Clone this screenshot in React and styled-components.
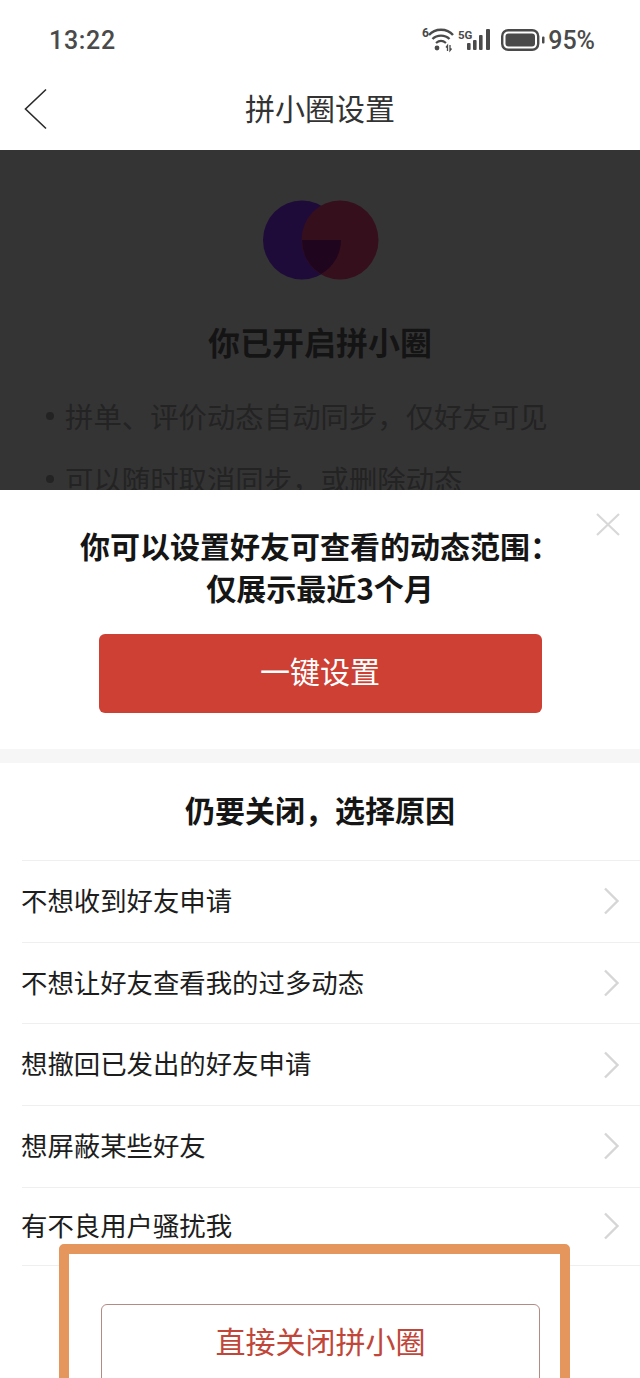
import React from 'react';
import styled, { createGlobalStyle } from 'styled-components';

const GlobalStyle = createGlobalStyle`
  html, body {
    margin: 0;
    padding: 0;
    background: #fff;
  }
  * {
    box-sizing: border-box;
  }
`;

const Page = styled.div`
  position: relative;
  width: 640px;
  height: 1378px;
  overflow: hidden;
  background: #fff;
  font-family: 'Noto Sans CJK SC', 'Liberation Sans', sans-serif;
`;

const StatusBar = styled.div`
  height: 72px;
  padding: 7px 45px 0 49px;
  display: flex;
  align-items: center;
  justify-content: space-between;
  color: #4a4a4a;
`;

const Clock = styled.span`
  margin-top: 2px;
  font-family: 'Roboto', 'Liberation Sans', sans-serif;
  font-size: 25px;
  font-weight: 500;
  letter-spacing: 0.7px;
`;

const StatusIcons = styled.div`
  display: flex;
  align-items: center;
`;

const StatusIcon = styled.svg`
  display: block;
  flex-shrink: 0;
  overflow: visible;
  margin-right: ${(p) => p.$gap}px;
`;

const Percent = styled.span`
  margin-top: 2px;
  font-family: 'Roboto', 'Liberation Sans', sans-serif;
  font-size: 25px;
  font-weight: 500;
`;

const NavBar = styled.div`
  position: relative;
  height: 78px;
  display: flex;
  align-items: center;
  justify-content: center;
`;

const BackIcon = styled.svg`
  position: absolute;
  left: 24px;
  top: 16px;
`;

const NavTitle = styled.div`
  font-size: 30px;
  line-height: 40px;
  padding-bottom: 8px;
  color: #333;
`;

const Intro = styled.section`
  height: 340px;
  overflow: hidden;
  background: #343434;
  color: #1f1f1f;
  padding-top: 50px;
  display: flex;
  flex-direction: column;
  align-items: center;
`;

const LogoMark = styled.svg`
  display: block;
  flex-shrink: 0;
  margin-left: 2px;
`;

const IntroTitle = styled.h1`
  margin: 39px 0 0;
  flex-shrink: 0;
  font-size: 32px;
  line-height: 44px;
  font-weight: 700;
  color: #141414;
`;

const BulletList = styled.ul`
  align-self: stretch;
  flex-shrink: 0;
  list-style: none;
  margin: 33px 0 0;
  padding: 0 0 0 46px;
  display: flex;
  flex-direction: column;
  gap: 23px;
`;

const Bullet = styled.li`
  display: flex;
  align-items: center;
  gap: 11px;
  font-size: 28.4px;
  line-height: 40px;
  color: #232323;

  &::before {
    content: '';
    width: 8px;
    height: 8px;
    border-radius: 50%;
    background: #232323;
  }
`;

const Offer = styled.section`
  position: relative;
  height: 259px;
  padding-top: 34px;
  display: flex;
  flex-direction: column;
  align-items: center;
`;

const CloseIcon = styled.svg`
  position: absolute;
  top: 23px;
  right: 20px;
`;

const OfferText = styled.div`
  font-size: 30px;
  line-height: 42px;
  font-weight: 700;
  color: #151515;
  text-align: center;
`;

const PrimaryButton = styled.button`
  margin-top: 26px;
  width: 443px;
  height: 79px;
  padding: 0 0 8px;
  border: none;
  border-radius: 6px;
  background: #cd4033;
  color: #fff;
  font-family: inherit;
  font-size: 30px;
`;

const SectionGap = styled.div`
  height: 14px;
  background: #f6f6f6;
`;

const ReasonHeading = styled.h2`
  margin: 0;
  height: 97px;
  padding-bottom: 6px;
  display: flex;
  align-items: center;
  justify-content: center;
  font-size: 30px;
  font-weight: 700;
  color: #151515;
`;

const ReasonList = styled.div`
  margin-left: 22px;
  border-bottom: 1px solid #efefef;
`;

const ReasonRow = styled.div`
  height: ${(p) => (p.$last ? '78px' : '81.7px')};
  padding-right: 20px;
  border-top: 1px solid #efefef;
  display: flex;
  align-items: center;
  justify-content: space-between;
  font-size: 26.4px;
  color: #1d1d1d;
`;

const ReasonLabel = styled.span`
  margin: 0 0 4px -1px;
`;

const Frame = styled.div`
  position: absolute;
  left: 59px;
  top: 1244px;
  width: 511px;
  height: 150px;
  border: 10px solid #e4965c;
  border-radius: 5px;
  background: #fff;
  padding: 50px 0 0 32px;
`;

const OutlineButton = styled.button`
  width: 439px;
  height: 90px;
  background: #fff;
  border: 1px solid #b48a85;
  border-radius: 6px;
  padding: 0 0 18px;
  color: #c0463a;
  font-family: inherit;
  font-size: 30px;
`;

// escapes keep the full-width punctuation of the screen
const bullets = [
  '拼单、评价动态自动同步\uFF0C仅好友可见',
  '可以随时取消同步\uFF0C或删除动态',
];

const offerLine = '你可以设置好友可查看的动态范围\uFF1A';
const reasonHeading = '仍要关闭\uFF0C选择原因';

const reasons = [
  '不想收到好友申请',
  '不想让好友查看我的过多动态',
  '想撤回已发出的好友申请',
  '想屏蔽某些好友',
  '有不良用户骚扰我',
];

const Wifi = () => (
  <StatusIcon $gap={4} width="32" height="24" viewBox="0 0 32 24" fill="none" stroke="#4a4a4a">
    <text x="0" y="9" fontSize="12" fontWeight="700" fill="#4a4a4a" stroke="none" fontFamily="Roboto, sans-serif">6</text>
    <path d="M7 7 C13 0 25 0 31 7" strokeWidth="2.4" />
    <path d="M10.5 11 C15 6.5 23 6.5 27.5 11" strokeWidth="2.4" />
    <path d="M14 15 C17 12.5 21 12.5 24 15" strokeWidth="2.2" />
    <circle cx="15" cy="20" r="2.4" fill="#4a4a4a" stroke="none" />
    <path d="M25.5 23 V17.5 L24 19.5 M28 17 V22.5 L29.5 20.5" strokeWidth="1.3" />
  </StatusIcon>
);

const Signal = () => (
  <StatusIcon $gap={9} width="34" height="22" viewBox="0 0 34 22" fill="#4a4a4a">
    <text x="0" y="10" fontSize="11.5" fontWeight="700" fontFamily="Roboto, sans-serif">5G</text>
    <rect x="9" y="14" width="3.6" height="7" rx="1" />
    <rect x="15" y="11" width="3.6" height="10" rx="1" />
    <rect x="21" y="6" width="3.6" height="15" rx="1" />
    <rect x="28" y="0" width="4" height="21" rx="1" />
  </StatusIcon>
);

const Battery = () => (
  <StatusIcon $gap={3} width="44" height="22" viewBox="0 0 44 22">
    <rect x="1.2" y="1.2" width="36" height="19.6" rx="6" fill="none" stroke="#4a4a4a" strokeWidth="2.4" />
    <rect x="4.5" y="4.5" width="29.5" height="13" rx="3" fill="#4a4a4a" />
    <rect x="41" y="7.5" width="2.5" height="7" rx="1" fill="#4a4a4a" />
  </StatusIcon>
);

const Logo = () => (
  <LogoMark width="116" height="80" viewBox="0 0 116 80">
    <ellipse cx="39" cy="40" rx="39" ry="39.5" fill="#1e0b3a" />
    <ellipse cx="77" cy="40" rx="38.5" ry="39.5" fill="#360f1c" />
    <path d="M39 40 H78 A39 39 0 0 1 58 74 A39 39 0 0 1 39 40 Z" fill="#20051f" />
  </LogoMark>
);

const Chevron = () => (
  <svg width="17" height="28" viewBox="0 0 17 28" fill="none" stroke="#d6d6d6" strokeWidth="2.4">
    <path d="M2 1.5 L14.5 14 L2 26.5" />
  </svg>
);

const App = () => (
  <Page>
    <GlobalStyle />
    <StatusBar>
      <Clock>13:22</Clock>
      <StatusIcons>
        <Wifi />
        <Signal />
        <Battery />
        <Percent>95%</Percent>
      </StatusIcons>
    </StatusBar>
    <NavBar>
      <BackIcon width="24" height="42" viewBox="0 0 24 42" fill="none" stroke="#2a2a2a" strokeWidth="1.6">
        <path d="M22 1.5 L1.5 21 L22 40.5" />
      </BackIcon>
      <NavTitle>拼小圈设置</NavTitle>
    </NavBar>
    <Intro>
      <Logo />
      <IntroTitle>你已开启拼小圈</IntroTitle>
      <BulletList>
        {bullets.map((bullet) => (
          <Bullet key={bullet}>{bullet}</Bullet>
        ))}
      </BulletList>
    </Intro>
    <Offer>
      <CloseIcon width="24" height="23" viewBox="0 0 24 23" fill="none" stroke="#d8d8d8" strokeWidth="2.2">
        <path d="M1 1 L23 22 M23 1 L1 22" />
      </CloseIcon>
      <OfferText>
        {offerLine}
        <br />
        仅展示最近3个月
      </OfferText>
      <PrimaryButton>一键设置</PrimaryButton>
    </Offer>
    <SectionGap />
    <ReasonHeading>{reasonHeading}</ReasonHeading>
    <ReasonList>
      {reasons.map((reason, index) => (
        <ReasonRow key={reason} $last={index === reasons.length - 1}>
          <ReasonLabel>{reason}</ReasonLabel>
          <Chevron />
        </ReasonRow>
      ))}
    </ReasonList>
    <Frame>
      <OutlineButton>直接关闭拼小圈</OutlineButton>
    </Frame>
  </Page>
);

export default App;
